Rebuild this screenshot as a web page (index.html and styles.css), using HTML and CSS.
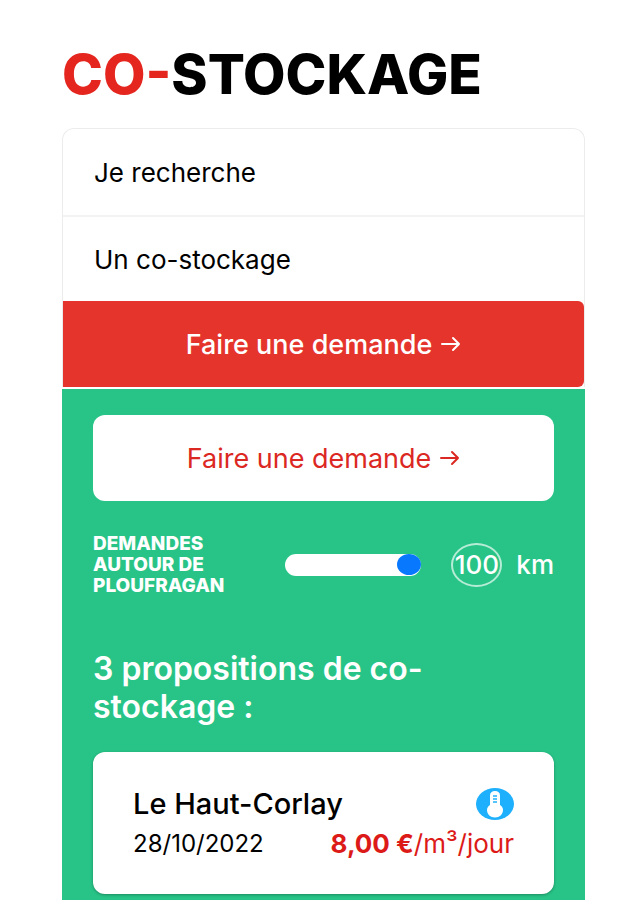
FILE: index.html
```html
<!DOCTYPE html>
<html lang="fr">
<head>
    <meta charset="UTF-8">
    <meta name="viewport" content="width=device-width, initial-scale=1.0">
    <title>Co-stockage</title>
    <link rel="stylesheet" href="styles.css">
</head>
<body>
    <main class="page">
        <h1 class="title"><span class="title-accent">CO-</span>STOCKAGE</h1>

        <form class="search">
            <select class="search-field" aria-label="Type d'annonce">
                <option>Je recherche</option>
            </select>
            <select class="search-field" aria-label="Type de service">
                <option>Un co-stockage</option>
            </select>
            <button type="button" class="btn btn-red">
                Faire une demande
                <svg class="arrow" viewBox="0 0 20 16" aria-hidden="true"><path d="M1 8h17M12 2l6 6-6 6"/></svg>
            </button>
        </form>

        <section class="results">
            <button type="button" class="btn btn-white">
                Faire une demande
                <svg class="arrow" viewBox="0 0 20 16" aria-hidden="true"><path d="M1 8h17M12 2l6 6-6 6"/></svg>
            </button>

            <div class="radius">
                <label class="radius-label" for="radius">Demandes autour de Ploufragan</label>
                <input class="radius-range" type="range" id="radius" min="0" max="100" value="100">
                <div class="radius-value">
                    <input class="radius-input" type="text" id="km" value="100">
                    <label for="km">km</label>
                </div>
            </div>

            <h2 class="results-title">3 propositions de co-stockage :</h2>

            <article class="card">
                <div class="card-row">
                    <h3 class="card-city">Le Haut-Corlay</h3>
                    <svg class="card-icon" viewBox="0 0 38 32" role="img" aria-label="Température">
                        <ellipse cx="19" cy="16" rx="19" ry="16" fill="#1eb0fc"/>
                        <path d="M14 7.500C14 4.500 16 3 19 3s5 1.500 5 4.500V17c2 1.200 3 3 3 5 0 4.500-3.500 7.500-8 7.500S11 26.500 11 22c0-2 1-3.800 3-5z" fill="#fff"/>
                        <path d="M18 7v9M20 7v9" stroke="#1eb0fc" stroke-width="1.500" stroke-dasharray="2 1" fill="none"/>
                    </svg>
                </div>
                <div class="card-row">
                    <span>28/10/2022</span>
                    <span class="card-price"><strong>8,00 €</strong>/m³/jour</span>
                </div>
            </article>
        </section>
    </main>
</body>
</html>
```
FILE: styles.css
```css
* {
    box-sizing: border-box;
}

body {
    margin: 0;
    background-color: #fff;
    color: #000;
    font-family: Inter, "Open Sans", sans-serif;
    font-size: 24px;
}

button, input, select {
    font: inherit;
    color: inherit;
}

.page {
    display: flex;
    flex-direction: column;
    min-height: 100vh;
    padding: 44px 48px 0 62px;
}

.title {
    margin: 0 0 24px;
    font-size: 55px;
    font-weight: 800;
    line-height: 60px;
}

.title-accent {
    color: #e5261f;
}

.search {
    display: flex;
    flex-direction: column;
    border: 1px solid #ececec;
    border-bottom: none;
    border-radius: 12px 12px 0 0;
    margin-bottom: 2px;
}

.search-field {
    appearance: none;
    height: 86px;
    padding: 0 31px;
    border: none;
    background: none;
    font-size: 26px;
}

.search-field + .search-field {
    border-top: 2px solid #f3f3f3;
}

.btn {
    display: flex;
    align-items: center;
    justify-content: center;
    gap: 9px;
    width: 100%;
    height: 86px;
    border: none;
    font-size: 27px;
    cursor: pointer;
}

.btn-red {
    background-color: #e5342c;
    color: #fff;
    border-radius: 0 6px 6px 0;
    font-weight: 500;
}

.btn-white {
    background-color: #fff;
    color: #dc2823;
    border-radius: 12px;
}

.arrow {
    width: 20px;
    height: 16px;
    fill: none;
    stroke: currentColor;
    stroke-width: 2;
    stroke-linecap: round;
    stroke-linejoin: round;
}

.results {
    flex: 1;
    padding: 26px 31px 6px;
    background-color: #28c487;
    color: #fff;
}

.radius {
    display: flex;
    align-items: center;
    gap: 30px;
    margin: 32px 0 54px;
}

.radius-label {
    flex: 1;
    font-size: 19px;
    font-weight: 800;
    line-height: 21px;
    text-transform: uppercase;
}

.radius-range {
    appearance: none;
    width: 136px;
    height: 22px;
    margin: 0;
    border-radius: 11px;
    background-color: #fff;
}

.radius-range::-webkit-slider-thumb {
    appearance: none;
    width: 24px;
    height: 21px;
    border-radius: 50%;
    background-color: #0879ff;
}

.radius-value {
    display: flex;
    align-items: center;
    gap: 14px;
    font-size: 26px;
    font-weight: 500;
}

.radius-input {
    width: 51px;
    height: 44px;
    padding: 0;
    border: 2px solid #b5ecd5;
    border-radius: 50%;
    background: none;
    text-align: center;
}

.results-title {
    max-width: 400px;
    margin: 0 0 26px;
    font-size: 32px;
    font-weight: 600;
    line-height: 38px;
}

.card {
    padding: 32px 40px 30px;
    border-radius: 12px;
    background-color: #fff;
    color: #000;
    box-shadow: 0 1px 3px rgba(0, 0, 0, 0.3);
}

.card-row {
    display: flex;
    align-items: center;
    justify-content: space-between;
    line-height: 40px;
}

.card-city {
    margin: 0;
    font-size: 29px;
    font-weight: 500;
}

.card-icon {
    width: 38px;
    height: 32px;
}

.card-price {
    color: #dc1a18;
    font-size: 26px;
}
```
